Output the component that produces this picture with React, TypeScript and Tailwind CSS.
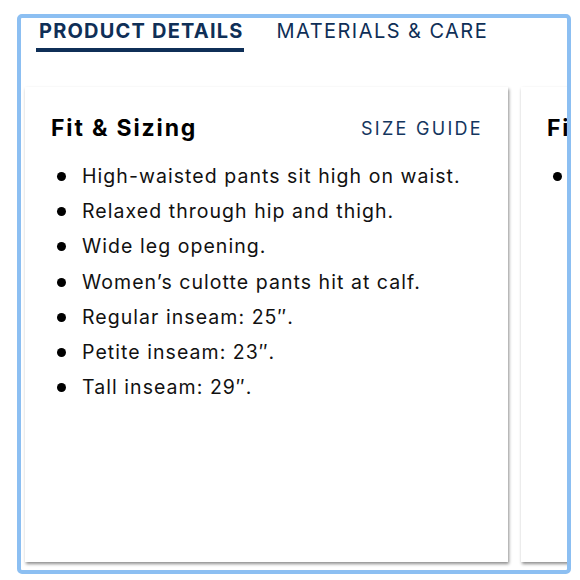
import React from "react";

const items = [
  "High-waisted pants sit high on waist.",
  "Relaxed through hip and thigh.",
  "Wide leg opening.",
  "Women\u2019s culotte pants hit at calf.",
  "Regular inseam: 25\u2033.",
  "Petite inseam: 23\u2033.",
  "Tall inseam: 29\u2033.",
];

function Card({ title, list, link }: { title: string; list: string[]; link?: string }) {
  return (
    <div className="w-[483px] h-[475px] shrink-0 bg-white shadow-[1px_2px_3px_rgba(0,0,0,0.45)] pl-[26px] pr-[27px] pt-[27px]">
      <div className="flex items-center justify-between h-[28px]">
        <h2 className="text-[23px] font-bold text-black leading-[28px] tracking-[1.85px]">{title}</h2>
        {link && <span className="text-[18px] text-[#14365e] tracking-[2.3px] mr-[-2px]">{link}</span>}
      </div>
      <ul className="mt-[17px]">
        {list.map((t) => (
          <li key={t} className="flex items-center h-[35.2px] text-[19.5px] text-[#111] tracking-[1.05px]">
            <span className="w-[9px] h-[9px] rounded-full bg-black ml-[6px] mr-[16px] shrink-0" />
            {t}
          </li>
        ))}
      </ul>
    </div>
  );
}

export default function App() {
  return (
    <div className="w-[580px] h-[580px] bg-white pt-[14px] pl-[17px]" style={{ fontFamily: "Inter, 'Noto Sans', sans-serif" }}>
      <div className="w-[554px] h-[560px] border-4 border-[#8cbff2] rounded-[5px] overflow-hidden flex flex-col">
        <div className="flex gap-[33px] pl-[15px] pt-[1px]">
          <div className="text-[20px] leading-[24px] font-bold text-[#0f2f57] pl-[3px] pb-[5px] border-b-4 border-[#0f2f57] tracking-[1.2px]">
            PRODUCT DETAILS
          </div>
          <div className="text-[20px] leading-[24px] text-[#0f2f57] tracking-[1.45px]">MATERIALS &amp; CARE</div>
        </div>
        <div className="flex gap-[13px] pl-[4px] mt-[35px]">
          <Card title="Fit & Sizing" list={items} link="SIZE GUIDE" />
          <Card title="Fit & Sizing" list={["Machine wash cold."]} />
        </div>
      </div>
    </div>
  );
}
